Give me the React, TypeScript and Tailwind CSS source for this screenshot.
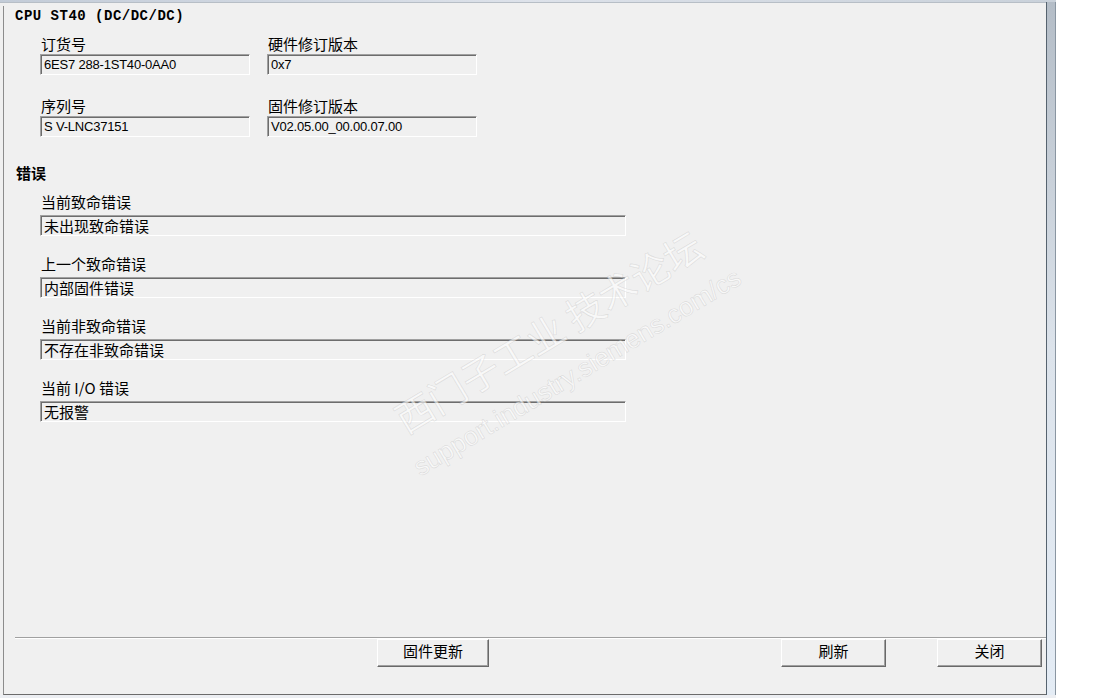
import React from "react";

// classic sunken read-only text box
const Field = ({ value, width, latin }: { value: string; width: string; latin?: boolean }) => (
  <div
    className={`${width} h-[21px] flex items-center pl-[3px] bg-[#f0f0f0] border border-t-[#a0a0a0] border-l-[#a0a0a0] border-r-white border-b-white shadow-[inset_1px_1px_0_#6d6d6d] ${
      latin
        ? "font-['Liberation_Sans',sans-serif] text-[13px] tracking-[-0.2px]"
        : "text-[15px]"
    }`}
  >
    <span className="leading-none whitespace-nowrap">{value}</span>
  </div>
);

const Label = ({ text }: { text: string }) => (
  <div className="h-[20px] leading-[20px] text-[15px] whitespace-nowrap">{text}</div>
);

const Button = ({ text, width }: { text: string; width: string }) => (
  <button
    className={`${width} h-[28px] pb-[3px] flex items-center justify-center text-[15px] bg-[#f0f0f0] border border-t-white border-l-white border-r-[#696969] border-b-[#696969] shadow-[inset_-1px_-1px_0_#a0a0a0]`}
  >
    {text}
  </button>
);

const errors = [
  { label: "当前致命错误", value: "未出现致命错误" },
  { label: "上一个致命错误", value: "内部固件错误" },
  { label: "当前非致命错误", value: "不存在非致命错误" },
  { label: "当前 I/O 错误", value: "无报警" },
];

export default function App() {
  return (
    <div className="relative w-[1119px] h-[698px] overflow-hidden bg-white flex text-black font-['Noto_Sans_CJK_SC',sans-serif]">
      <div className="w-[1056px] h-full flex flex-col">
        <div className="h-[2px] bg-gradient-to-r from-[#c3ccd8] via-[#dde2ea] to-[#c9d1da]" />
        <div className="flex">
          {/* PANEL */}
          <div className="w-[1046px] h-[693px] bg-[#f0f0f0] border-t border-[#b7bec6] pl-[3px] pt-[3px] flex">
            <div className="flex-1 flex flex-col border-l border-l-[#8c8c8c] border-b border-b-[#6b6b6b]">
              <div className="pl-[11px] pt-[2px]">
                <div className="h-[16px] leading-[16px] font-['Liberation_Mono',monospace] font-bold text-[14px] tracking-[0.5px]">
                  CPU ST40 (DC/DC/DC)
                </div>
              </div>

              {/* module info */}
              <div className="pl-[36px] mt-[10px] flex gap-[17px]">
                <div className="flex flex-col">
                  <div className="pl-[1px]"><Label text="订货号" /></div>
                  <Field value="6ES7 288-1ST40-0AA0" width="w-[210px]" latin />
                  <div className="pl-[1px] mt-[21px]"><Label text="序列号" /></div>
                  <Field value="S V-LNC37151" width="w-[210px]" latin />
                </div>
                <div className="flex flex-col">
                  <div className="pl-[1px]"><Label text="硬件修订版本" /></div>
                  <Field value="0x7" width="w-[210px]" latin />
                  <div className="pl-[1px] mt-[21px]"><Label text="固件修订版本" /></div>
                  <Field value="V02.05.00_00.00.07.00" width="w-[210px]" latin />
                </div>
              </div>

              {/* errors */}
              <div className="pl-[12px] mt-[26px] h-[20px] leading-[20px] text-[15px] font-bold">错误</div>
              <div className="pl-[36px] mt-[9px] flex flex-col">
                {errors.map((e, i) => (
                  <div key={i} className={i === 0 ? "flex flex-col" : "flex flex-col mt-[18px]"}>
                    <div className="pl-[1px] mb-[3px]"><Label text={e.label} /></div>
                    <Field value={e.value} width="w-[586px]" />
                  </div>
                ))}
              </div>

              {/* bottom bar */}
              <div className="mt-auto pb-[27px]">
                <div className="ml-[11px] border-t border-t-[#a0a0a0] border-b border-b-white" />
                <div className="flex">
                  <div className="ml-[373px]"><Button text="固件更新" width="w-[112px]" /></div>
                  <div className="ml-[292px]"><Button text="刷新" width="w-[105px]" /></div>
                  <div className="ml-[51px]"><Button text="关闭" width="w-[105px]" /></div>
                </div>
              </div>
            </div>
          </div>

          {/* window frame */}
          <div className="w-[10px] h-[693px] flex">
            <div className="w-px bg-[#56636f]" />
            <div className="flex-1 bg-gradient-to-b from-[#b4bdc7] via-[#dce3eb] to-[#e4ecf5]" />
            <div className="w-px bg-[#8a96a2]" />
          </div>
        </div>
        <div className="h-[3px] bg-[#eceef2]" />
      </div>
      <div className="flex-1 bg-white" />

      {/* watermark */}
      <div className="absolute left-[548px] top-[331px] -translate-x-1/2 -translate-y-1/2 -rotate-[31deg] whitespace-nowrap text-[38px] leading-none text-white/60 [-webkit-text-stroke:0.7px_rgba(150,150,150,0.25)] pointer-events-none">
        西门子工业 技术论坛
      </div>
      <div className="absolute left-[577px] top-[372px] -translate-x-1/2 -translate-y-1/2 -rotate-[31deg] whitespace-nowrap text-[26px] leading-none font-['Liberation_Sans',sans-serif] text-white/60 [-webkit-text-stroke:0.7px_rgba(150,150,150,0.25)] pointer-events-none">
        support.industry.siemens.com/cs
      </div>
    </div>
  );
}
